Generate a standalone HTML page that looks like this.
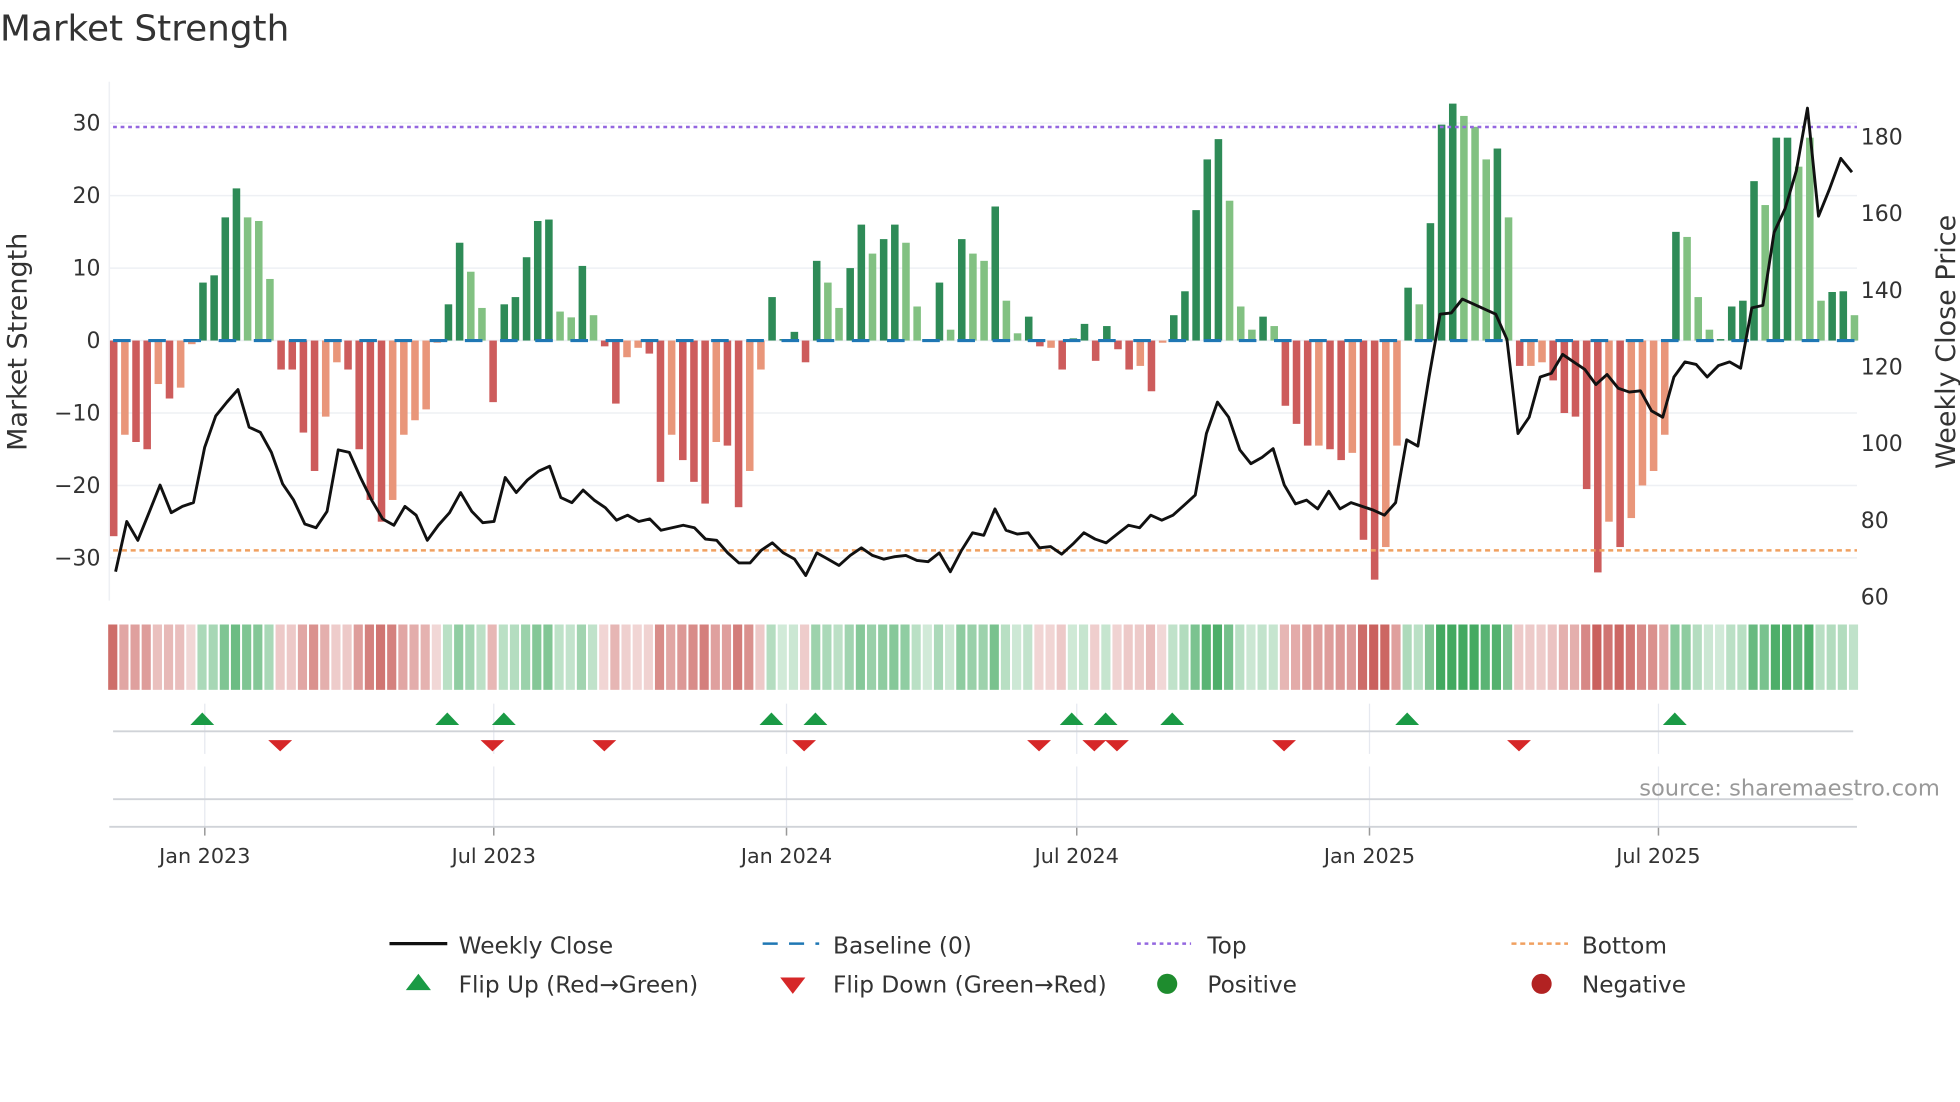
<!DOCTYPE html>
<html><head><meta charset="utf-8"><style>
html,body{margin:0;padding:0;background:#fff;width:1960px;height:1102px;overflow:hidden}
svg{display:block}
text{font-family:"DejaVu Sans","Liberation Sans",sans-serif;fill:#333}
</style></head><body>
<svg id="s" width="1960" height="1102" viewBox="0 0 1560 877" xmlns="http://www.w3.org/2000/svg">
<text x="0" y="32" font-size="28.5">Market Strength</text>
<g id="grid"></g>
<g id="bars"></g>
<g id="strip"></g>
<g id="over"></g>
<g id="labels" font-size="17.5"></g>
<text transform="translate(21,272) rotate(-90)" font-size="21.5" text-anchor="middle">Market Strength</text>
<text transform="translate(1556,272) rotate(-90)" font-size="21.5" text-anchor="middle">Weekly Close Price</text>
<text x="1544" y="633" font-size="18" text-anchor="end" style="fill:#999">source: sharemaestro.com</text>
<g font-size="18.5">
<line x1="310" y1="751" x2="356" y2="751" stroke="#111" stroke-width="2.5"/>
<text x="365" y="759">Weekly Close</text>
<line x1="607" y1="751" x2="652" y2="751" stroke="#1f77b4" stroke-width="2" stroke-dasharray="12 9"/>
<text x="663" y="759">Baseline (0)</text>
<line x1="905" y1="751" x2="948" y2="751" stroke="#9467e0" stroke-width="2" stroke-dasharray="3 3"/>
<text x="961" y="759">Top</text>
<line x1="1203" y1="751" x2="1248" y2="751" stroke="#f0a060" stroke-width="2" stroke-dasharray="4 3"/>
<text x="1259" y="759">Bottom</text>
<polygon points="323,788 343,788 333,775" fill="#1a9a45"/>
<text x="365" y="790">Flip Up (Red→Green)</text>
<polygon points="621,778 641,778 631,791" fill="#d62728"/>
<text x="663" y="790">Flip Down (Green→Red)</text>
<circle cx="929" cy="783" r="8" fill="#1e8c2e"/>
<text x="961" y="790">Positive</text>
<circle cx="1227" cy="783" r="8" fill="#b22222"/>
<text x="1259" y="790">Negative</text>
</g>
</svg>
<script>
var NS="http://www.w3.org/2000/svg";
function el(p,t,a){var e=document.createElementNS(NS,t);for(var k in a)e.setAttribute(k,a[k]);document.getElementById(p).appendChild(e);return e;}
var B=[[-27,1],[-13,0],[-14,1],[-15,1],[-6,0],[-8,1],[-6.5,0],[-0.5,0],[8,1],[9,1],[17,1],[21,1],[17,0],[16.5,0],[8.5,0],[-4,1],[-4,1],[-12.7,1],[-18,1],[-10.5,0],[-3,0],[-4,1],[-15,1],[-22,1],[-25,1],[-22,0],[-13,0],[-11,0],[-9.5,0],[-0.3,0],[5,1],[13.5,1],[9.5,0],[4.5,0],[-8.5,1],[5,1],[6,1],[11.5,1],[16.5,1],[16.7,1],[4,0],[3.2,0],[10.3,1],[3.5,0],[-0.8,1],[-8.7,1],[-2.3,0],[-1,0],[-1.8,1],[-19.5,1],[-13,0],[-16.5,1],[-19.5,1],[-22.5,1],[-14,0],[-14.5,1],[-23,1],[-18,0],[-4,0],[6,1],[0.2,1],[1.2,1],[-3,1],[11,1],[8,0],[4.5,0],[10,1],[16,1],[12,0],[14,1],[16,1],[13.5,0],[4.7,0],[0,0],[8,1],[1.5,0],[14,1],[12,0],[11,0],[18.5,1],[5.5,0],[1,0],[3.3,1],[-0.8,1],[-1,0],[-4,1],[0.3,1],[2.3,1],[-2.8,1],[2,1],[-1.2,1],[-4,1],[-3.5,0],[-7,1],[-0.3,0],[3.5,1],[6.8,1],[18,1],[25,1],[27.8,1],[19.3,0],[4.7,0],[1.5,0],[3.3,1],[2,0],[-9,1],[-11.5,1],[-14.5,1],[-14.5,0],[-15,1],[-16.5,1],[-15.5,0],[-27.5,1],[-33,1],[-28.5,0],[-14.5,0],[7.3,1],[5,0],[16.2,1],[29.8,1],[32.7,1],[31,0],[29.5,0],[25,0],[26.5,1],[17,0],[-3.5,1],[-3.5,0],[-3,0],[-5.5,1],[-10,1],[-10.5,1],[-20.5,1],[-32,1],[-25,0],[-28.5,1],[-24.5,0],[-20,0],[-18,0],[-13,0],[15,1],[14.3,0],[6,0],[1.5,0],[0.2,1],[4.7,1],[5.5,1],[22,1],[18.7,0],[28,1],[28,1],[24,0],[28,0],[5.5,0],[6.7,1],[6.8,1],[3.5,0]];
var N=B.length, x0=90.5, dx=(1476-90.5)/(N-1);
function Y(v){return 271-v*5.767;}
[30,20,10,0,-10,-20,-30].forEach(function(v){el("grid","line",{x1:87,x2:1478,y1:Y(v),y2:Y(v),stroke:"#eef0f4","stroke-width":1.2});
 el("labels","text",{x:80,y:Y(v)+6,"text-anchor":"end"}).textContent=(v<0?"\u2212"+(-v):v);});
el("grid","line",{x1:87,x2:87,y1:65,y2:478,stroke:"#eef0f4","stroke-width":1.2});
[163,393,626,857,1090,1320].forEach(function(x){el("grid","line",{x1:x,x2:x,y1:560,y2:600,stroke:"#e6e9f0","stroke-width":1});el("grid","line",{x1:x,x2:x,y1:610,y2:658,stroke:"#e6e9f0","stroke-width":1});el("grid","line",{x1:x,x2:x,y1:658,y2:665,stroke:"#999","stroke-width":1.2});});
var tl=["Jan 2023","Jul 2023","Jan 2024","Jul 2024","Jan 2025","Jul 2025"];
[163,393,626,857,1090,1320].forEach(function(x,i){el("labels","text",{x:x,y:687,"text-anchor":"middle","font-size":"16.5"}).textContent=tl[i];});
[180,160,140,120,100,80,60].forEach(function(p){el("labels","text",{x:1481,y:109+(180-p)*3.05+6}).textContent=p;});
B.forEach(function(b,i){var v=b[0],x=x0+i*dx-3;var c=v>=0?(b[1]?"#2e8b57":"#82c182"):(b[1]?"#cd5c5c":"#e9967a");
 var y1=Y(Math.max(v,0)),y2=Y(Math.min(v,0));if(Math.abs(y2-y1)<0.8)y2=y1+0.8;
 el("bars","rect",{x:x,y:y1,width:6,height:y2-y1,fill:c});
 var a=0.22+0.68*Math.min(1,Math.abs(v)/30);
 el("strip","rect",{x:x0+i*dx-4.4,y:497,width:dx-1.6,height:52,fill:v>=0?"#2ea04f":"#c4504c","fill-opacity":a.toFixed(2)});
});
el("over","line",{x1:90,x2:1478,y1:271,y2:271,stroke:"#1f77b4","stroke-width":2.5,"stroke-dasharray":"14 14"});
el("over","line",{x1:90,x2:1478,y1:101,y2:101,stroke:"#9467e0","stroke-width":2,"stroke-dasharray":"3 3"});
el("over","line",{x1:90,x2:1478,y1:438,y2:438,stroke:"#f0a060","stroke-width":2,"stroke-dasharray":"4 3"});
var P=[455,415,430,408,386,408,403,400,356,331,320,310,340,344,360,385,398,417,420,407,358,360,380,398,413,418,403,410,430,418,408,392,407,416,415,380,392,382,375,371,396,400,390,398,404,414,410,415,413,422,420,418,420,429,430,440,448,448,438,432,440,445,458,440,445,450,442,436,442,445,443,442,446,447,440,455,438,424,426,405,422,425,424,436,435,441,433,424,429,432,425,418,420,410,414,410,402,394,345,320,332,358,369,364,357,386,401,398,405,391,405,400,403,406,410,400,350,355,300,250,249,238,242,246,250,270,345,332,300,297,282,288,294,306,298,309,312,311,327,332,300,288,290,300,291,288,293,245,243,185,166,136,86,172,150,126,137];
var d="";P.forEach(function(y,i){d+=(i?"L":"M")+(92+i*((1474-92)/(P.length-1))).toFixed(1)+","+y;});
el("over","path",{d:d,fill:"none",stroke:"#111","stroke-width":2.3,"stroke-linejoin":"round"});
el("over","line",{x1:90,x2:1475,y1:582,y2:582,stroke:"#d0d3d8","stroke-width":1.5});
el("over","line",{x1:90,x2:1475,y1:636,y2:636,stroke:"#d0d3d8","stroke-width":1.5});
el("over","line",{x1:87,x2:1478,y1:658,y2:658,stroke:"#d0d3d8","stroke-width":1.5});
[161,356,401,614,649,853,880,933,1120,1333].forEach(function(x){el("over","polygon",{points:(x-9.5)+",577 "+(x+9.5)+",577 "+x+",567",fill:"#1a9a45"});});
[223,392,481,640,827,871,889,1022,1209].forEach(function(x){el("over","polygon",{points:(x-9.5)+",589 "+(x+9.5)+",589 "+x+",598",fill:"#d62728"});});
</script>
</body></html>
